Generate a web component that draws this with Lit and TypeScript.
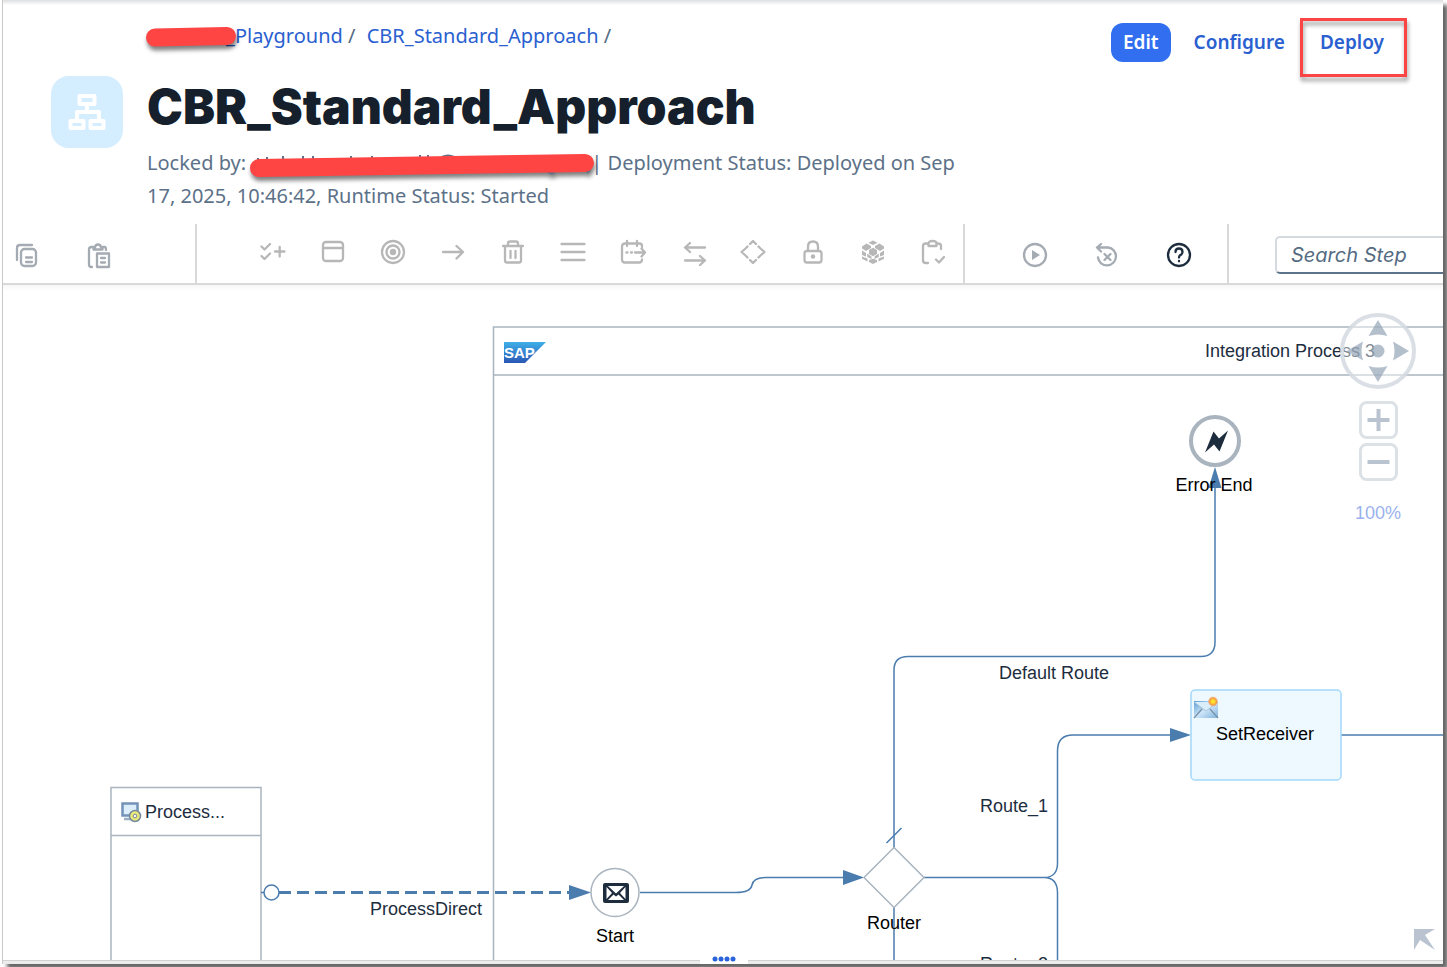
import { LitElement, html, svg, css } from "lit";
import { customElement } from "lit/decorators.js";

const icon = (body: unknown) => html`<svg class="icon" width="28" height="28" viewBox="0 0 28 28" aria-hidden="true">${body}</svg>`;

const clipboardTools = [
  { label: "Copy", body: svg`<path d="M4 19V7Q4 4 7 4H19"/><rect x="8" y="8" width="15" height="17" rx="3.5"/><path d="M13 16.5h6M13 21h6"/>` },
  { label: "Paste", body: svg`<path d="M7 26H6.500Q4 26 4 23.500V8.500Q4 6 6.500 6H8M18 6h1.500Q21 6 21 9"/><path d="M8.500 8.500V6.500H10Q10.300 3.500 13 3.500T16 6.500H17.500V8.500Z"/><path d="M12 12.500H24V26H12Z"/><path d="M16 17h4M16 21.500h4"/>` },
];

const stepTools = [
  { label: "Participants and checks", body: svg`<path d="M2.500 8.500L5.500 11.500L11 6M2.500 18L5.500 21L11 15.500M16 13.500H25.500M20.700 9V18.500"/>` },
  { label: "Process", body: svg`<rect x="4" y="4" width="20" height="19" rx="3"/><path d="M4 10H24"/>` },
  { label: "Events", body: svg`<circle cx="14" cy="14" r="11"/><circle cx="14" cy="14" r="6.500"/><circle class="solid" cx="14" cy="14" r="3.200"/>` },
  { label: "Connector", body: svg`<path d="M4 14H24M17.500 8L24 14L17.500 20.500"/>` },
  { label: "Delete", body: svg`<path d="M4 8H24M9 8V5.500Q9 3.500 11 3.500H17Q19 3.500 19 5.500V8M6 8V22.500Q6 24.500 8 24.500H20Q22 24.500 22 22.500V8M11.500 13V20M16.500 13V20"/>` },
  { label: "List", body: svg`<path d="M2.500 6H25.500M2.500 14H25.500M2.500 22H25.500"/>` },
  { label: "Timer", body: svg`<path d="M23 9V8Q23 5.500 20.500 5.500H6Q3 5.500 3 8.500V21.500Q3 24.500 6 24.500H20Q23 24.500 23 21.500M8 3V8M18 3V8M16 14.500H26M22.500 10.500L26 14.500L22.500 18.500"/><path d="M7.500 14.500h1M12 14.500h1"/>` },
  { label: "Mapping", body: svg`<path d="M26 9.500H6M11 5L6 9.500L11 14M6 22.500H26M21 18L26 22.500L21 27"/>` },
  { label: "Routing", body: svg`<path d="M11 6L14 3L17 6M22 11L25.500 14L22 17M17 22L14 25L11 22M6 17L2.500 14L6 11M8.500 8.500L7 10M19.500 8.500L21 10M8.500 19.500L7 18M19.500 19.500L21 18"/>` },
  { label: "Security", body: svg`<rect x="5.500" y="13" width="17" height="11.500" rx="2.500"/><path d="M9 13V8.500Q9 3.500 14 3.500T19 8.500V13"/><circle class="solid" cx="14" cy="18.500" r="2.200"/>` },
  { label: "Persistence", body: svg`<g class="solid"><path d="M14 2.500L18.500 4.700L14 7L9.500 4.700ZM7.500 5.500L12 8V10L7 13L3 10.500V8.500ZM20.500 5.500L25 8.500V10.500L21 13L16 10V8ZM14 9.800L18 12V16L14 18.200L10 16V12ZM3 12.500L7 15V18.500L3 17ZM25 12.500L21 15V18.500L25 17ZM3 18.500L8.500 20.500V23.500L3 20.700ZM25 18.500L19.500 20.500V23.500L25 20.700ZM8.200 15.500L12.500 18.500V21L8.200 19ZM19.800 15.500L15.500 18.500V21L19.800 19ZM10 22L14 20.700L18 22V24L14 26L10 24Z"/></g>` },
  { label: "Validator", body: svg`<path d="M9 5.500H7Q4 5.500 4 8V22.500Q4 25 7 25H9M18 5.500H19Q22 5.500 22 8V11M9.500 5.500Q9.500 3 13.500 3T17.500 5.500V8H9.500ZM17 21.500L20 24.500L25 19"/>` },
];

const runTools = [
  { label: "Simulate", body: svg`<circle cx="14" cy="14" r="11"/><path class="solid" d="M11 9L19 14L11 19Z"/>` },
  { label: "Reset simulation", body: svg`<path d="M4 6.500H15A9 9 0 1 1 5 16.500M8 3L4 6.500L8 10.500M11.500 13L17.500 19M17.500 13L11.500 19"/>` },
  { label: "Help", dark: true, body: svg`<circle cx="14" cy="14" r="11"/><path d="M10.500 11Q10.500 7.500 14 7.500T17.500 11Q17.500 13 15.500 14Q14 14.800 14 16.500"/><path d="M14 20v.3"/>` },
];

@customElement("flow-toolbar")
export class FlowToolbar extends LitElement {
  static styles = css`
    :host { display: flex; height: 59px; border-bottom: 2px solid #d9d9d9; }
    .group { display: flex; align-items: center; flex: none; border-right: 2px solid #d9d9d9; box-sizing: border-box; }
    .clipboard { gap: 24px; padding: 2px 72px 0 0; color: #a5abb2; }
    .steps { gap: 20px; padding: 0 10px 4px 56px; color: #b7b7b7; }
    .run { gap: 24px; padding: 2px 24px 0 46px; color: #a5abb2; }
    button { display: flex; align-items: center; justify-content: center; width: 48px; height: 40px; padding: 0; border: 0; background: none; color: inherit; }
    .steps button { width: 40px; }
    button.dark { color: #1d2d3e; }
    .icon { fill: none; stroke: currentColor; stroke-width: 2.3; stroke-linecap: round; stroke-linejoin: round; }
    .solid { fill: currentColor; stroke: none; }
    .search { flex: 1; min-width: 0; height: 38px; margin: 12px 0 0 46px; box-sizing: border-box; padding: 0 0 0 14px; border: 2px solid #d5dadf; border-bottom: 2px solid #5b738b; border-right: 0; border-radius: 5px 0 0 5px; font: italic 20px Inter, sans-serif; color: #556b82; background: #fff; outline: 0; }
    .search::placeholder { color: #556b82; opacity: 1; }
  `;
  render() {
    return html`
      <div class="group clipboard">${clipboardTools.map((t) => html`<button aria-label=${t.label}>${icon(t.body)}</button>`)}</div>
      <div class="group steps">${stepTools.map((t) => html`<button aria-label=${t.label}>${icon(t.body)}</button>`)}</div>
      <div class="group run">${runTools.map((t) => html`<button class=${t.dark ? "dark" : ""} aria-label=${t.label}>${icon(t.body)}</button>`)}</div>
      <input class="search" type="text" aria-label="Search Step" placeholder="Search Step" />
    `;
  }
}

@customElement("flow-canvas")
export class FlowCanvas extends LitElement {
  static styles = css`
    :host { display: block; position: relative; overflow: hidden; background: linear-gradient(#f6f6f6, #fff 6px); font-family: "Liberation Sans", Arial, sans-serif; }
    .diagram { position: absolute; inset: 0; width: 100%; height: 100%; font-size: 18px; }
    .shape { fill: #fff; stroke: #a9b4be; stroke-width: 1.5; }
    .end { stroke-width: 4; }
    .step { fill: #edf8ff; stroke: #a3d8fb; stroke-width: 1.5; }
    .flow { fill: none; stroke: #4b7cae; stroke-width: 1.5; }
    .message { fill: none; stroke: #4b7cae; stroke-width: 3; stroke-dasharray: 12 6; }
    .head { fill: #4b7cae; }
    .ink { fill: #1d2d3e; }
    .caption { fill: #1d2d3e; }
    .name { fill: #000; }
    .mid { text-anchor: middle; }
    .logo-text { fill: #fff; font-weight: 700; font-size: 15px; }
    .controls { position: absolute; top: 28px; right: 27px; width: 76px; display: flex; flex-direction: column; align-items: center; gap: 4px; }
    button { display: block; padding: 0; border: 0; background: none; }
    .pan { width: 76px; height: 76px; margin-bottom: 8px; }
    .zoom { width: 39px; height: 38px; }
    output { margin-top: 17px; font-size: 18px; line-height: 22px; color: #9ab2ec; }
    .corner { position: absolute; right: 8px; bottom: 10px; width: 21px; height: 21px; }
    svg { display: block; }
  `;
  render() {
    return html`
      <svg class="diagram" role="img" aria-label="Integration flow">
        <defs>
          <linearGradient id="brand" x1="0" y1="0" x2="0" y2="1"><stop offset="0" stop-color="#3fb0e8"/><stop offset="1" stop-color="#2a57b5"/></linearGradient>
          <linearGradient id="mail" x1="0" y1="0" x2="1" y2="1"><stop offset="0" stop-color="#5b9bd3"/><stop offset="0.500" stop-color="#cde5f7"/><stop offset="1" stop-color="#7fb2dd"/></linearGradient>
          <radialGradient id="spark"><stop offset="0.300" stop-color="#ffe02a"/><stop offset="0.700" stop-color="#f49a4a"/><stop offset="1" stop-color="#f49a4a" stop-opacity="0.300"/></radialGradient>
        </defs>
        <g transform="translate(-3 -285)">
          <rect class="shape" x="493.500" y="327" width="2400" height="900"/>
          <path class="shape" d="M493 375H2900"/>
          <path fill="url(#brand)" d="M504 342H546L525 363H504Z"/>
          <text class="logo-text" x="504" y="358">SAP</text>
          <text class="caption mid" x="1290" y="357">Integration Process 3</text>

          <rect class="shape" x="111" y="787.500" width="150" height="400"/>
          <path class="shape" d="M111 835.500H261"/>
          <g>
            <rect x="122.500" y="803.500" width="15" height="12" fill="#dbeefa" stroke="#7292b8" stroke-width="2.500"/>
            <path d="M124 819H132" stroke="#9aaec6" stroke-width="2.500"/>
            <circle cx="135" cy="816" r="5.500" fill="#e9e878" stroke="#76889b" stroke-width="1.500"/>
            <circle cx="135" cy="816" r="1.800" fill="#fff" stroke="#76889b"/>
          </g>
          <text class="caption" x="145" y="818">Process...</text>

          <path class="message" d="M279 892.500H570"/>
          <path class="flow" d="M261 892.500H264"/>
          <circle cx="271.500" cy="892.500" r="7.500" fill="#fff" stroke="#4b7cae" stroke-width="1.500"/>
          <path class="head" d="M569 885L591 892.500L569 900Z"/>
          <text class="caption mid" x="426" y="915">ProcessDirect</text>

          <circle class="shape" cx="615" cy="892.500" r="24"/>
          <rect class="ink" x="603" y="883" width="26" height="20" rx="2"/>
          <path d="M606.500 887V899L612 893ZM625.500 887V899L620 893ZM608 886H624L616 893.500ZM608 900L613.500 894.500L616 896.500L618.500 894.500L624 900Z" fill="#fff"/>
          <text class="name mid" x="615" y="942">Start</text>

          <path class="flow" d="M640 892.500H736C745 892.500 751 890 752 885C753 880 757 877.500 766 877.500H845"/>
          <path class="head" d="M843 870L864 877.500L843 885Z"/>
          <path class="flow" d="M894 848V670Q894 656.500 908 656.500H1201Q1215 656.500 1215 642V487"/>
          <path class="head" d="M1208.500 488L1215 467L1221.500 488Z"/>
          <path class="flow" d="M886.500 843L901.500 828M894 907V1000"/>
          <path class="flow" d="M924 877.500H1044Q1058 877.500 1057.500 862V751Q1057.500 735 1073 735H1170M1044 877.500Q1057.500 877.500 1057.500 893V1000"/>
          <path class="head" d="M1170 728L1191 735L1170 742Z"/>
          <path class="shape" d="M894 847.500L924 877.500L894 907.500L864 877.500Z"/>
          <text class="name mid" x="894" y="929">Router</text>
          <text class="caption mid" x="1054" y="679">Default Route</text>
          <text class="caption mid" x="1014" y="812">Route_1</text>
          <text class="caption mid" x="1014" y="970">Route_2</text>

          <circle class="shape end" cx="1215" cy="441" r="24"/>
          <path class="ink" d="M1205 452.500L1213.500 431.500L1219 438.500L1228 430.500L1219.500 451.500L1214 444.500Z"/>
          <text class="name mid" x="1214" y="491">Error End</text>

          <path class="flow" d="M1341 735H2900"/>
          <rect class="step" x="1191" y="690" width="150" height="90" rx="4"/>
          <rect x="1194" y="701" width="24" height="17" fill="url(#mail)"/>
          <path d="M1194 718L1202 709M1218 718L1210 709" stroke="#7890a5" stroke-width="1.200"/>
          <path d="M1194 702L1206 711L1218 702" fill="#d9edfb" stroke="#9bbcd8" stroke-width="0.800"/>
          <circle cx="1213" cy="701.500" r="5" fill="url(#spark)"/>
          <text class="name mid" x="1265" y="740">SetReceiver</text>
        </g>
      </svg>
      <div class="controls">
        <button class="pan" aria-label="Pan">
          <svg width="76" height="76" viewBox="0 0 76 76"><circle cx="38" cy="38" r="36" fill="#fff" fill-opacity="0.450" stroke="#d3d9e0" stroke-opacity="0.850" stroke-width="4"/>
            <g fill="#8c9db1" fill-opacity="0.650"><circle cx="38" cy="38" r="6.500"/><path d="M38 7L47.500 23Q38 20 28.500 23ZM38 69L47.500 53Q38 56 28.500 53ZM69 38L53 47.500Q56 38 53 28.500ZM7 38L23 47.500Q20 38 23 28.500Z"/></g></svg>
        </button>
        <button class="zoom" aria-label="Zoom in"><svg width="39" height="38" viewBox="0 0 39 38"><rect x="1.500" y="1.500" width="36" height="35" rx="6" fill="#fff" stroke="#dce1e6" stroke-width="3"/><path d="M8.500 19H30.500M19.500 8V30" stroke="#bac4d0" stroke-width="4"/></svg></button>
        <button class="zoom" aria-label="Zoom out"><svg width="39" height="38" viewBox="0 0 39 38"><rect x="1.500" y="1.500" width="36" height="35" rx="6" fill="#fff" stroke="#dce1e6" stroke-width="3"/><path d="M8.500 19H30.500" stroke="#bac4d0" stroke-width="4"/></svg></button>
        <output>100%</output>
      </div>
      <button class="corner" aria-label="Open overview"><svg width="21" height="21" viewBox="0 0 21 21"><path fill="#bac4d0" d="M0 0H21L11 6L21 21L6 11L0 21Z"/></svg></button>
    `;
  }
}

@customElement("app-root")
export class AppRoot extends LitElement {
  static styles = css`
    :host { display: flex; height: 100vh; box-sizing: border-box; padding: 0 4px 3px 2px; overflow: hidden; background: #fff; font-family: "Noto Sans", sans-serif; }
    .window { flex: 1; min-width: 0; display: flex; flex-direction: column; position: relative; border-left: 1px solid #c9c9c9; background: linear-gradient(#dcdee0, #fff 5px); box-shadow: 5px 5px 4px rgba(0, 0, 0, 0.6); }
    header { display: flex; align-items: flex-start; padding: 18px 47px 12px 48px; }
    .avatar { flex: none; width: 72px; height: 72px; margin: 58px 24px 0 0; border-radius: 18px; background: #d4edff; }
    .avatar svg { display: block; }
    .heading { flex: 0 1 820px; min-width: 0; }
    nav { font-size: 20px; line-height: 36px; color: #556b82; white-space: nowrap; }
    a { color: #2a60d0; text-decoration: none; }
    nav a + a { margin-left: 6px; }
    h1 { margin: 22px 0 9px; font-family: Inter, sans-serif; font-size: 48px; line-height: 61px; font-weight: 900; color: #161f2c; white-space: nowrap; }
    .status { margin: 0; font-size: 20px; line-height: 33px; color: #5c7188; }
    .redacted { display: inline-block; position: relative; height: 20px; vertical-align: middle; }
    .redacted svg { position: absolute; overflow: visible; left: 0; top: 0; filter: drop-shadow(1px 4px 2px rgba(0, 0, 0, 0.5)); }
    .short { width: 79px; }
    .long { width: 340px; }
    .mark { stroke: #ff4444; stroke-width: 18; stroke-linecap: round; }
    .trace { stroke: #5c7188; stroke-width: 2; fill: none; }
    .actions { display: flex; align-items: center; gap: 11px; margin: 5px 0 0 auto; }
    .actions button { height: 39px; padding: 0 12px 2px; border: 0; border-radius: 12px; background: none; color: #2a60d0; font: 600 19px "Noto Sans", sans-serif; }
    .actions .primary { background: #316ff0; color: #fff; }
    .focus { position: relative; }
    .focus::after { content: ""; position: absolute; inset: -5px -11px -15px -8px; border: 3px solid #fb4444; filter: drop-shadow(1px 4px 2px rgba(0, 0, 0, 0.4)); pointer-events: none; }
    flow-canvas { flex: 1; min-height: 0; }
    footer { height: 4px; box-sizing: border-box; border-top: 1px solid #d2d2d2; background: #ececec; position: relative; }
    .grip { position: absolute; left: 50%; bottom: 0; width: 48px; height: 8px; margin-left: -23px; padding: 0 0 2px; border: 0; background: #fff; }
    .grip svg { display: block; margin: 0 auto; }
  `;
  render() {
    return html`
      <div class="window">
        <header>
          <div class="avatar">
            <svg width="72" height="72" viewBox="0 0 72 72" fill="none" stroke="#fff" stroke-width="4" stroke-linejoin="round">
              <path d="M28.500 20H43.500V28H28.500ZM19.500 45H32.500V52H19.500ZM39.500 45H52.500V52H39.500ZM36 28V36M26 45V36H48V45"/>
            </svg>
          </div>
          <div class="heading">
            <nav aria-label="Breadcrumb"><a href="#package"><span class="redacted short"><svg width="90" height="20"><path class="mark" d="M8 9.500L80 8"/></svg></span>_Playground</a> / <a href="#artifact">CBR_Standard_Approach</a> /</nav>
            <h1>CBR_Standard_Approach</h1>
            <p class="status">Locked by: <span class="redacted long"><svg width="340" height="20"><path class="trace" d="M6 4h2M16 2v2M32 1v4M52 1v4M62 1v4M100 1v4M121 1v4M169 0v4M177 0v4M191 2Q197 -1 203 2M297 17Q301 20 304 17M336 18L339 15"/><path class="mark" d="M8 13L334 8"/></svg></span>| Deployment Status: Deployed on Sep 17, 2025, 10:46:42, Runtime Status: Started</p>
          </div>
          <div class="actions">
            <button class="primary">Edit</button>
            <button>Configure</button>
            <div class="focus"><button>Deploy</button></div>
          </div>
        </header>
        <flow-toolbar></flow-toolbar>
        <flow-canvas></flow-canvas>
        <footer><button class="grip" aria-label="Resize panel"><svg width="26" height="6"><g fill="#2a63dc"><circle cx="4" cy="3" r="2.500"/><circle cx="10" cy="3" r="2.500"/><circle cx="16" cy="3" r="2.500"/><circle cx="22" cy="3" r="2.500"/></g></svg></button></footer>
      </div>
    `;
  }
}
